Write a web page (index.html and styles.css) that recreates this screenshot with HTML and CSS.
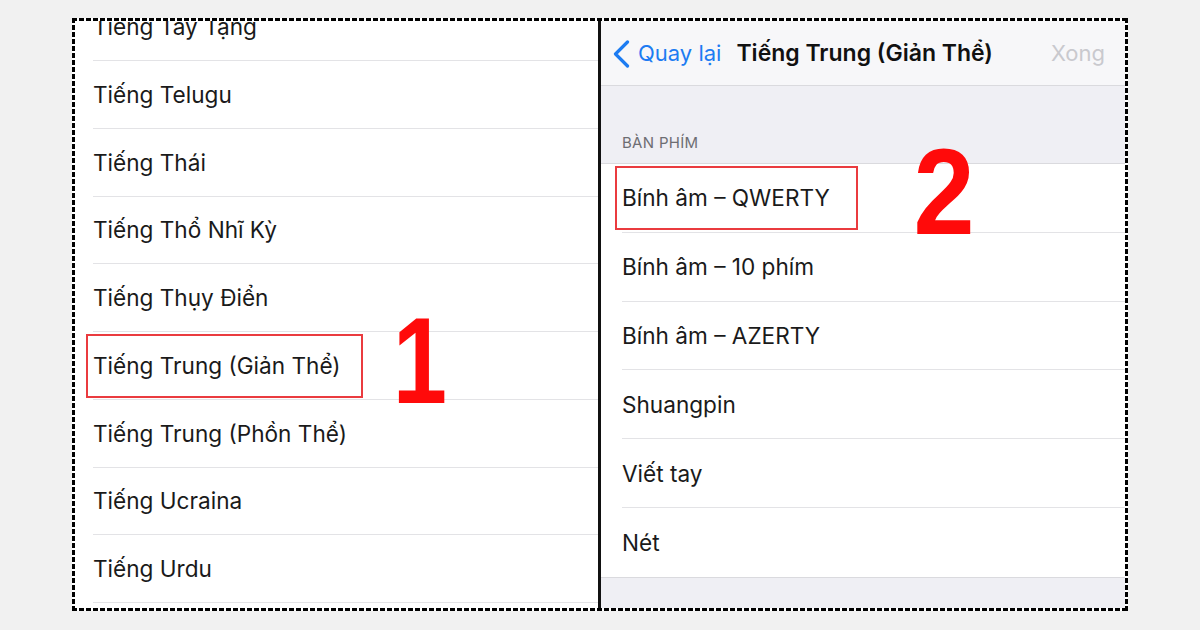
FILE: index.html
```html
<!DOCTYPE html>
<html lang="vi">
<head>
<meta charset="utf-8">
<title>Tiếng Trung (Giản Thể)</title>
<link rel="stylesheet" href="styles.css">
</head>
<body>
<div class="frame">
  <div class="panel left">
    <ul class="lang-list">
      <li>Tiếng Tây Tạng</li>
      <li>Tiếng Telugu</li>
      <li>Tiếng Thái</li>
      <li>Tiếng Thổ Nhĩ Kỳ</li>
      <li>Tiếng Thụy Điển</li>
      <li>Tiếng Trung (Giản Thể)</li>
      <li>Tiếng Trung (Phồn Thể)</li>
      <li>Tiếng Ucraina</li>
      <li>Tiếng Urdu</li>
    </ul>
    <div class="mark mark-1"></div>
    <div class="num num-1">1</div>
  </div>
  <div class="divider"></div>
  <div class="panel right">
    <div class="navbar">
      <svg class="chev" width="17" height="28" viewBox="0 0 17 28"><polyline points="14.5,2 2.5,14 14.5,26" fill="none" stroke="#1d7cf2" stroke-width="3.2" stroke-linecap="round" stroke-linejoin="round"/></svg>
      <span class="back">Quay lại</span>
      <span class="title">Tiếng Trung (Giản Thể)</span>
      <span class="done">Xong</span>
    </div>
    <div class="section-head">BÀN PHÍM</div>
    <ul class="kb-list">
      <li>Bính âm – QWERTY</li>
      <li>Bính âm – 10 phím</li>
      <li>Bính âm – AZERTY</li>
      <li>Shuangpin</li>
      <li>Viết tay</li>
      <li>Nét</li>
    </ul>
    <div class="mark mark-2"></div>
    <div class="num num-2">2</div>
  </div>
</div>
</body>
</html>
```

FILE: styles.css
```css
html, body {
  margin: 0;
  padding: 0;
}
body {
  background: #f1f1f1;
  width: 1200px;
  height: 630px;
  overflow: hidden;
  font-family: Inter, "Liberation Sans", Arial, sans-serif;
  color: #1a1a1a;
}
.frame {
  margin: 18px 0 0 72px;
  width: 1056px;
  height: 593px;
  box-sizing: border-box;
  padding: 3px;
  display: flex;
  background:
    repeating-linear-gradient(90deg, #000 0 5px, transparent 5px 7px) top left / 100% 3px no-repeat,
    repeating-linear-gradient(90deg, #000 0 5px, transparent 5px 7px) bottom left / 100% 3px no-repeat,
    repeating-linear-gradient(180deg, #000 0 5px, transparent 5px 7px) top left / 3px 100% no-repeat,
    repeating-linear-gradient(180deg, #000 0 5px, transparent 5px 7px) top right / 3px 100% no-repeat,
    #fff;
}
.panel {
  position: relative;
  overflow: hidden;
  height: 587px;
}
.left {
  width: 523px;
  background: #fff;
}
.divider {
  width: 3px;
  background: #111;
}
.right {
  flex: 1;
  background: #efeff4;
}
ul {
  list-style: none;
  margin: 0;
  padding: 0;
}
.lang-list {
  margin-top: -27.75px;
}
.lang-list li {
  height: 67.75px;
  box-sizing: border-box;
  margin-left: 18px;
  border-bottom: 1px solid #e3e3e6;
  display: flex;
  align-items: center;
  font-size: 22.6px;
}
.navbar {
  height: 65px;
  box-sizing: border-box;
  background: #f7f7f9;
  border-bottom: 1px solid #dadade;
  display: flex;
  align-items: center;
  padding: 0 20px 0 12px;
  font-size: 22px;
}
.chev {
  display: block;
  margin-top: 1px;
}
.back {
  color: #1d7cf2;
  margin-left: 8px;
}
.title {
  font-weight: 600;
  font-size: 23px;
  margin-left: 15px;
  color: #111;
}
.done {
  margin-left: auto;
  color: #c9c9ce;
}
.section-head {
  height: 77px;
  box-sizing: border-box;
  display: flex;
  align-items: flex-end;
  padding: 0 0 11px 21px;
  font-size: 15px;
  line-height: 18px;
  color: #6d6d72;
  letter-spacing: 0.3px;
}
.kb-list {
  background: #fff;
  border-top: 1px solid #dadade;
  border-bottom: 1px solid #dadade;
}
.kb-list li {
  height: 68.8px;
  box-sizing: border-box;
  margin-left: 21px;
  border-bottom: 1px solid #e3e3e6;
  display: flex;
  align-items: center;
  font-size: 22.6px;
}
.kb-list li:last-child {
  border-bottom: none;
}
.mark {
  position: absolute;
  box-sizing: border-box;
  border: 2px solid #ea3b3f;
}
.mark-1 {
  left: 11px;
  top: 313px;
  width: 277px;
  height: 64px;
}
.mark-2 {
  left: 14px;
  top: 145px;
  width: 243px;
  height: 64px;
}
.num {
  position: absolute;
  font-family: "Liberation Sans", Arial, sans-serif;
  font-weight: 700;
  font-size: 122px;
  line-height: 1;
  color: #ff0a0a;
  transform: scaleX(0.9);
  transform-origin: center;
}
.num-1 {
  left: 311px;
  top: 279px;
  transform: scaleX(0.8);
}
.num-2 {
  left: 309px;
  top: 110px;
}
```
